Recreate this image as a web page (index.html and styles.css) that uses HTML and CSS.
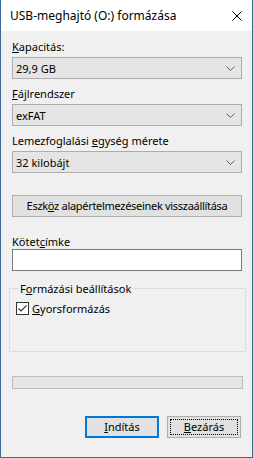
FILE: index.html
```html
<!DOCTYPE html>
<html lang="hu">
<head>
<meta charset="utf-8">
<title>USB-meghajtó (O:) formázása</title>
<link rel="stylesheet" href="styles.css">
</head>
<body>
<div class="window">
  <div class="titlebar">
    <span class="title">USB-meghajtó (O:) formázása</span>
    <span class="close">
      <svg width="10" height="10" viewBox="0 0 10 10"><path d="M0.5 0.5 L9.5 9.5 M9.5 0.5 L0.5 9.5" stroke="#000" stroke-width="1" fill="none"/></svg>
    </span>
  </div>
  <div class="content">
    <div class="label first"><u>K</u>apacitás:</div>
    <div class="combo"><span>29,9 GB</span><svg class="chev" width="9" height="5" viewBox="0 0 9 5"><path d="M0.5 0.5 L4.5 4.5 L8.5 0.5" stroke="#606060" fill="none"/></svg></div>
    <div class="label"><u>F</u>ájlrendszer</div>
    <div class="combo"><span>exFAT</span><svg class="chev" width="9" height="5" viewBox="0 0 9 5"><path d="M0.5 0.5 L4.5 4.5 L8.5 0.5" stroke="#606060" fill="none"/></svg></div>
    <div class="label">Lemezfoglalási <u>e</u>gység mérete</div>
    <div class="combo"><span>32 kilobájt</span><svg class="chev" width="9" height="5" viewBox="0 0 9 5"><path d="M0.5 0.5 L4.5 4.5 L8.5 0.5" stroke="#606060" fill="none"/></svg></div>
    <div class="btn wide">Eszk<u>ö</u>z alapértelmezéseinek visszaállítása</div>
    <div class="label vol">Kötet<u>c</u>ímke</div>
    <div class="input"></div>
    <fieldset class="group">
      <legend>F<u>o</u>rmázási beállítások</legend>
      <div class="check">
        <span class="box"><svg width="11" height="11" viewBox="0 0 11 11"><path d="M1.5 5.5 L4 8 L9.5 2.5" stroke="#333" stroke-width="1.1" fill="none"/></svg></span>
        <span><u>G</u>yorsformázás</span>
      </div>
    </fieldset>
    <div class="progress"></div>
    <div class="actions">
      <div class="btn default"><u>I</u>ndítás</div>
      <div class="btn focus"><span class="focusring"><u>B</u>ezárás</span></div>
    </div>
  </div>
</div>
</body>
</html>
```
FILE: styles.css
```css
* { box-sizing: border-box; }
html, body { margin: 0; padding: 0; }
body {
  font-family: "Noto Sans", "Open Sans", sans-serif;
  font-size: 12px;
  color: #000;
  background: #f0f0f0;
}
.window {
  width: 253px;
  height: 458px;
  border: 1px solid #3d6a94;
  border-top: none;
  background: #f0f0f0;
  display: flex;
  flex-direction: column;
}
.titlebar {
  height: 31px;
  background: #fff;
  display: flex;
  align-items: center;
  justify-content: space-between;
  padding: 0 10px 0 9px;
}
.title { font-size: 12px; line-height: 15px; }
.close { display: flex; width: 10px; height: 10px; }
.content {
  padding: 0 10px 0 11px;
  display: flex;
  flex-direction: column;
  font-size: 11px;
}
.label {
  line-height: 15px;
  height: 15px;
  margin-top: 7px;
  margin-bottom: 3px;
  white-space: nowrap;
}
.label.first { margin-top: 8px; }
.combo {
  height: 22px;
  background: #e5e5e5;
  border: 1px solid #adadad;
  display: flex;
  align-items: center;
  justify-content: space-between;
  padding: 0 6px 0 3px;
}
.chev { display: block; }
.btn {
  height: 22px;
  background: #e1e1e1;
  border: 1px solid #adadad;
  text-align: center;
  line-height: 20px;
  white-space: nowrap;
}
.btn.wide { margin-top: 22px; letter-spacing: -0.3px; }
.label.vol { margin-top: 17px; margin-bottom: 0; }
.input {
  height: 22px;
  background: #fff;
  border: 1px solid #7a7a7a;
}
.group {
  margin: 10px -4px 0 -3px;
  padding: 5px 0 0 6px;
  height: 71px;
  border: 1px solid #dcdcdc;
  min-width: 0;
}
.group legend {
  padding: 0 1px;
  margin-left: 3px;
  line-height: 15px;
}
.check {
  display: flex;
  align-items: center;
  gap: 3px;
  line-height: 15px;
}
.box {
  width: 13px;
  height: 13px;
  border: 1px solid #333;
  background: #fff;
  display: flex;
  align-items: center;
  justify-content: center;
}
.box svg { display: block; }
.progress {
  margin-top: 24px;
  height: 13px;
  background: #e6e6e6;
  border: 1px solid #bcbcbc;
  margin-right: -1px;
}
.actions {
  margin-top: 27px;
  display: flex;
  justify-content: flex-end;
  gap: 8px;
  padding-right: 1px;
}
.actions .btn { width: 74px; }
.btn.default { border: 2px solid #0078d7; line-height: 18px; }
.btn.focus { padding: 2px; }
.focusring {
  display: block;
  height: 100%;
  border: 1px dotted #000;
  line-height: 14px;
}
u { text-decoration: underline; text-underline-offset: 1px; }
```
